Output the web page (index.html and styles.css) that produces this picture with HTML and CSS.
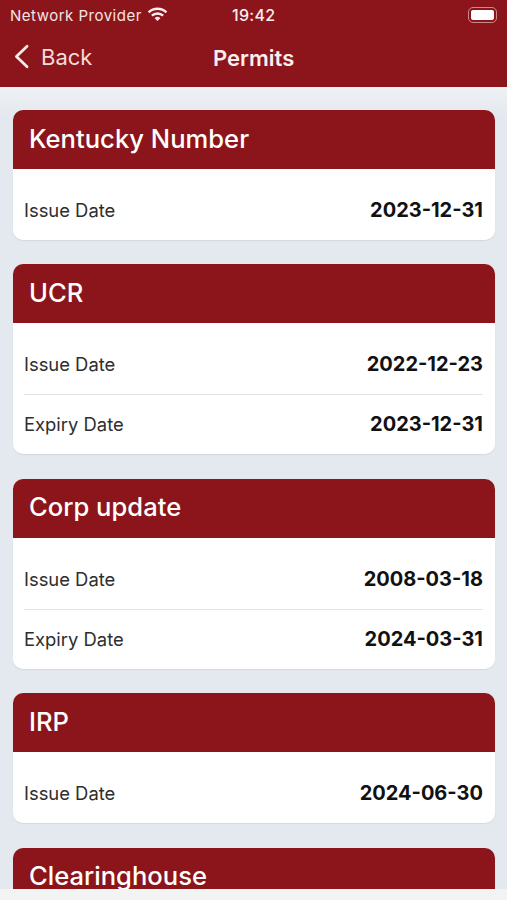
FILE: index.html
```html
<!DOCTYPE html>
<html lang="en">
<head>
<meta charset="utf-8">
<title>Permits</title>
<link rel="stylesheet" href="styles.css">
</head>
<body>
<div class="app">
  <header class="top">
    <div class="status">
      <div class="status-left">
        <span>Network Provider</span>
        <svg class="wifi" viewBox="0 0 22 16" width="21" height="15"><path d="M1.5 5.8a13.6 13.6 0 0 1 19 0" fill="none" stroke="#fbeeee" stroke-width="2.6"/><path d="M5 9.3a8.7 8.7 0 0 1 12 0" fill="none" stroke="#fbeeee" stroke-width="2.6"/><path d="M7.9 11.9 11 15l3.1-3.1a4.4 4.4 0 0 0-6.2 0z" fill="#fbeeee"/></svg>
      </div>
      <div class="status-time">19:42</div>
      <div class="battery"><span class="battery-fill"></span></div>
    </div>
    <nav class="nav">
      <div class="back">
        <svg viewBox="0 0 18 28" width="17" height="26"><path d="M15 2.5 3.5 13.5 15 24.5" fill="none" stroke="#f8e9e9" stroke-width="3" stroke-linecap="round" stroke-linejoin="round"/></svg>
        <span>Back</span>
      </div>
      <h1 class="title">Permits</h1>
    </nav>
  </header>
  <main class="list">
    <section class="card">
      <h2 class="card-head">Kentucky Number</h2>
      <div class="card-body">
        <div class="row"><span class="label">Issue Date</span><span class="value">2023-12-31</span></div>
      </div>
    </section>
    <section class="card">
      <h2 class="card-head">UCR</h2>
      <div class="card-body">
        <div class="row"><span class="label">Issue Date</span><span class="value">2022-12-23</span></div>
        <div class="row"><span class="label">Expiry Date</span><span class="value">2023-12-31</span></div>
      </div>
    </section>
    <section class="card">
      <h2 class="card-head">Corp update</h2>
      <div class="card-body">
        <div class="row"><span class="label">Issue Date</span><span class="value">2008-03-18</span></div>
        <div class="row"><span class="label">Expiry Date</span><span class="value">2024-03-31</span></div>
      </div>
    </section>
    <section class="card">
      <h2 class="card-head">IRP</h2>
      <div class="card-body">
        <div class="row"><span class="label">Issue Date</span><span class="value">2024-06-30</span></div>
      </div>
    </section>
    <section class="card">
      <h2 class="card-head">Clearinghouse</h2>
    </section>
  </main>
  <div class="bottom"></div>
</div>
</body>
</html>
```
FILE: styles.css
```css
* { box-sizing: border-box; }
html, body { margin: 0; padding: 0; height: 100%; overflow: hidden; }
body { font-family: Inter, "Liberation Sans", sans-serif; background: #e4e9ef; }
.app { height: 900px; display: flex; flex-direction: column; }
.top { background: #8b151a; height: 87px; flex: none; color: #fbeeee; }
.status { display: flex; align-items: center; height: 30px; padding: 0 10px; position: relative; justify-content: space-between; }
.status-left { display: flex; align-items: center; gap: 5px; font-size: 15px; letter-spacing: 0.5px; color: #f5e4e4; }
.wifi { margin-top: -2px; }
.status-time { font-size: 16px; font-weight: 500; letter-spacing: 0.3px; position: absolute; left: 232px; top: 5px; }
.battery { width: 29px; height: 16px; border: 1px solid #c98a8c; border-radius: 5px; padding: 2px; margin-top: -1px; }
.battery-fill { display: block; width: 100%; height: 100%; background: #fff; border-radius: 2px; }
.nav { display: flex; align-items: center; height: 57px; padding: 0 0 3px 13px; position: relative; }
.back { display: flex; align-items: center; gap: 11px; font-size: 22px; color: #f3dcdc; }
.title { position: absolute; left: 213px; top: 14px; margin: 0; font-size: 22px; line-height: 28px; font-weight: 600; color: #fbeeee; }
.list { flex: 1; min-height: 0; overflow: hidden; padding: 23px 12px 0 13px; display: flex; flex-direction: column; gap: 24.4px; background: linear-gradient(#eef1f4, #e4e9ef 30px); }
.card { flex: none; background: #fff; border-radius: 10px; box-shadow: 0 1px 1px rgba(90, 100, 110, 0.12); }
.card-head { margin: 0; height: 59px; background: #8b151a; color: #fff; border-radius: 10px 10px 0 0; padding: 0 16px 3px 16px; display: flex; align-items: center; font-size: 25.6px; font-weight: 500; }
.card-body { padding-top: 11px; }
.row { height: 60px; margin: 0 12px 0 11px; display: flex; align-items: center; justify-content: space-between; }
.row + .row { border-top: 1px solid #e3e3e3; padding-bottom: 1px; }
.label { font-size: 18.4px; color: #2e2e2e; }
.value { font-size: 20px; font-weight: 700; color: #111; }
.bottom { flex: none; height: 11px; background: #f2f3f3; }
```
